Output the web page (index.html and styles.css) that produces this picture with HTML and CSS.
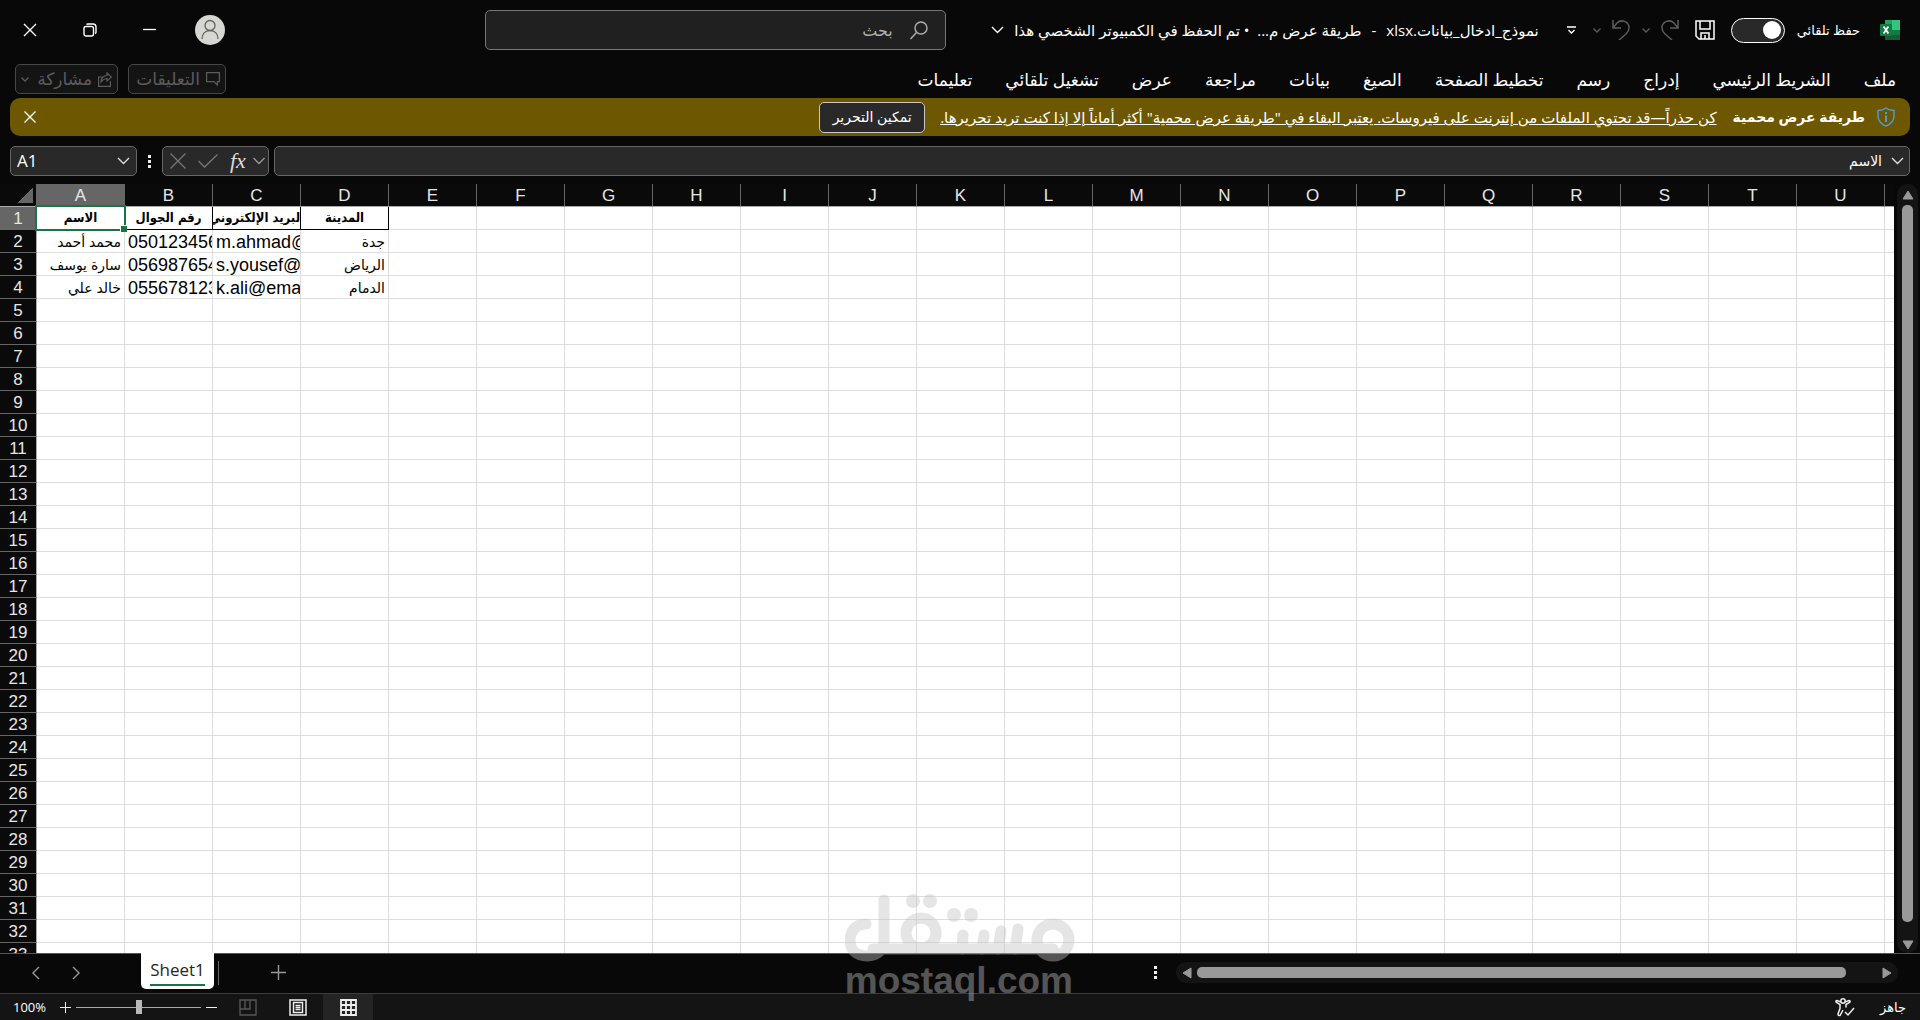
FILE: index.html
```html
<!DOCTYPE html>
<html lang="ar" dir="rtl">
<head>
<meta charset="utf-8">
<title>نموذج_ادخال_بيانات.xlsx</title>
<link rel="stylesheet" href="styles.css">
</head>
<body>
<header class="titlebar">
  <div class="titlebar-start">
    <svg class="app-icon" width="20" height="20" viewBox="0 0 20 20" aria-hidden="true">
      <path d="M5 0h15v20H5z" fill="#21a366"/><path d="M12 0h8v10h-8z" fill="#33c481"/><path d="M5 10h15v10H5z" fill="#185c37"/><path d="M12 10h8v5h-8z" fill="#107c41"/>
      <rect y="4" width="12" height="12" rx="1" fill="#107c41"/>
      <path d="M3.600 6.500l4.800 7M8.400 6.500l-4.800 7" stroke="#fff" stroke-width="1.800"/>
    </svg>
    <label class="autosave" for="autosave">حفظ تلقائي</label>
    <input class="toggle" type="checkbox" role="switch" id="autosave">
    <button class="icon-button save" aria-label="حفظ">
      <svg width="20" height="20" viewBox="0 0 20 20" fill="none" stroke="#fff" stroke-width="1.500"><path d="M1 1h18v18H4l-3-3zM5 1v8h10V1M6 19v-6h8v6M10 15v4"/></svg>
    </button>
    <button class="icon-button redo" aria-label="إعادة">
      <svg width="18" height="20" viewBox="0 0 18 20" fill="none" stroke="#5c5c5c" stroke-width="1.500"><path d="M17 0v8H9M17 8L13 3C9-1 1 1 1 8c0 2 1 4 3 6l7 6"/></svg>
    </button>
    <button class="icon-button history" aria-label="خيارات الإعادة"><svg width="8" height="5" viewBox="0 0 8 5" fill="none" stroke="#5c5c5c" stroke-width="1.300"><path d="M.5.5L4 4 7.500.5"/></svg></button>
    <button class="icon-button undo" aria-label="تراجع">
      <svg width="18" height="20" viewBox="0 0 18 20" fill="none" stroke="#5c5c5c" stroke-width="1.500"><path d="M1 0v8h8M1 8l4-5c4-4 12-2 12 5 0 2-1 4-3 6l-7 6"/></svg>
    </button>
    <button class="icon-button history" aria-label="خيارات التراجع"><svg width="8" height="5" viewBox="0 0 8 5" fill="none" stroke="#5c5c5c" stroke-width="1.300"><path d="M.5.5L4 4 7.500.5"/></svg></button>
    <button class="icon-button customize" aria-label="تخصيص"><svg width="9" height="9" viewBox="0 0 9 9" fill="none" stroke="#fff" stroke-width="1.300"><path d="M0 1h9M1.500 4l3 3 3-3"/></svg></button>
    <button class="doc-title"><span>نموذج_ادخال_بيانات.xlsx</span><span>-</span><span>طريقة عرض م...&nbsp; • تم الحفظ في الكمبيوتر الشخصي هذا</span><svg width="13" height="8" viewBox="0 0 13 8" fill="none" stroke="#fff" stroke-width="1.400"><path d="M1 1l5.500 5.500L12 1"/></svg></button>
  </div>
  <div class="search">
    <svg width="18" height="19" viewBox="0 0 18 19" fill="none" stroke="#b0b0b0" stroke-width="1.400"><circle cx="11" cy="7" r="6"/><path d="M6.700 11.300L.5 18"/></svg>
    <input type="text" placeholder="بحث" aria-label="بحث">
  </div>
  <div class="window-controls">
    <button class="avatar" aria-label="الحساب"><svg width="30" height="30" viewBox="0 0 30 30" fill="none" stroke="#626262" stroke-width="1.300"><circle cx="15" cy="10.500" r="5"/><path d="M7 24c0-5 3-8.500 8-8.500s8 3.500 8 8.500"/></svg></button>
    <button class="icon-button" aria-label="تصغير"><svg width="14" height="14" viewBox="0 0 14 14" stroke="#fff" stroke-width="1.300"><path d="M0 6.500h13"/></svg></button>
    <button class="icon-button" aria-label="استعادة"><svg width="14" height="14" viewBox="0 0 14 14" fill="none" stroke="#fff" stroke-width="1.400"><rect x="1" y="3.500" width="9.500" height="9.500" rx="2"/><path d="M3.500 1.500Q4 1 5 1h5q3 0 3 3v5q0 1-.8 1.600"/></svg></button>
    <button class="icon-button" aria-label="إغلاق"><svg width="14" height="14" viewBox="0 0 14 14" stroke="#fff" stroke-width="1.400"><path d="M1 1l12 12M13 1L1 13"/></svg></button>
  </div>
</header>

<div class="ribbon">
  <nav class="tabs">
    <button>ملف</button><button>الشريط الرئيسي</button><button>إدراج</button><button>رسم</button><button>تخطيط الصفحة</button><button>الصيغ</button><button>بيانات</button><button>مراجعة</button><button>عرض</button><button>تشغيل تلقائي</button><button>تعليمات</button>
  </nav>
  <div class="ribbon-actions">
    <button class="ribbon-action comments" disabled><svg width="14" height="14" viewBox="0 0 14 14" fill="none" stroke="#5c5c5c" stroke-width="1.200"><path d="M.6.600h12.800v9h-2v3.500L8 9.600H.6z"/></svg>التعليقات</button>
    <button class="ribbon-action share" disabled><svg width="14" height="15" viewBox="0 0 14 15" fill="none" stroke="#5c5c5c" stroke-width="1.200"><path d="M4 5H.6v9.400h11.800V9M9 1l4.500 4L9 9V6.500C6 6.500 4.500 8 3 10c0-4 2.500-6.500 6-6.500z"/></svg>مشاركة<svg class="share-arrow" width="8" height="5" viewBox="0 0 8 5" fill="none" stroke="#5c5c5c" stroke-width="1.300"><path d="M.5.5L4 4 7.500.5"/></svg></button>
  </div>
</div>

<div class="banner">
  <svg width="18" height="20" viewBox="0 0 18 20" fill="none" stroke="#4f9be0" stroke-width="1.400"><path d="M9 1c2.500 2 5 2.500 8 2.500V9c0 5-3 8-8 10-5-2-8-5-8-10V3.500C4 3.500 6.500 3 9 1z"/><path d="M9 8.500V15M9 5v2" stroke-width="2"/></svg>
  <strong>طريقة عرض محمية</strong>
  <a href="#protected">كن حذراً—قد تحتوي الملفات من إنترنت على فيروسات. يعتبر البقاء في "طريقة عرض محمية" أكثر أماناً إلا إذا كنت تريد تحريرها.</a>
  <button class="enable">تمكين التحرير</button>
  <button class="icon-button banner-close" aria-label="إغلاق"><svg width="12" height="12" viewBox="0 0 12 12" stroke="#fff" stroke-width="1.400"><path d="M.5.5l11 11M11.500.5l-11 11"/></svg></button>
</div>

<div class="formula-bar" dir="ltr">
  <div class="field name-box">
    <input type="text" value="A1" aria-label="مربع الاسم">
    <svg width="13" height="8" viewBox="0 0 13 8" fill="none" stroke="#ddd" stroke-width="1.400"><path d="M1 1l5.500 5.500L12 1"/></svg>
  </div>
  <span class="dots"></span>
  <div class="field fx-box">
    <svg width="16" height="16" viewBox="0 0 16 16" stroke="#777" stroke-width="1.300"><path d="M.5.5l15 15M15.500.5l-15 15"/></svg>
    <svg width="20" height="14" viewBox="0 0 20 14" fill="none" stroke="#777" stroke-width="1.300"><path d="M.5 7l6 6L19.500.5"/></svg>
    <button class="fx">fx</button>
    <svg width="12" height="8" viewBox="0 0 12 8" fill="none" stroke="#999" stroke-width="1.300"><path d="M.5 1L6 6.500 11.500 1"/></svg>
  </div>
  <div class="field formula" dir="rtl">
    <svg width="13" height="8" viewBox="0 0 13 8" fill="none" stroke="#ddd" stroke-width="1.400"><path d="M1 1l5.500 5.500L12 1"/></svg>
    <input type="text" value="الاسم" aria-label="شريط الصيغة">
  </div>
</div>

<main class="workspace" dir="ltr">
  <div class="sheet">
    <table class="grid">
      <thead><tr id="letters"><th class="corner"></th></tr></thead>
      <tbody id="rows">
        <tr class="headings"><th class="active">1</th><td class="selected"><div dir="rtl">الاسم</div></td><td><div dir="rtl">رقم الجوال</div></td><td><div dir="rtl">البريد الإلكتروني</div></td><td><div dir="rtl">المدينة</div></td></tr>
        <tr><th>2</th><td dir="rtl">محمد أحمد</td><td>0501234567</td><td>m.ahmad@email.com</td><td dir="rtl">جدة</td></tr>
        <tr><th>3</th><td dir="rtl">سارة يوسف</td><td>0569876543</td><td>s.yousef@email.com</td><td dir="rtl">الرياض</td></tr>
        <tr><th>4</th><td dir="rtl">خالد علي</td><td>0556781234</td><td>k.ali@email.com</td><td dir="rtl">الدمام</td></tr>
      </tbody>
    </table>
  </div>
  <div class="vscroll">
    <svg width="12" height="10" viewBox="0 0 12 10" fill="#999"><path d="M6 1l5 8H1z" stroke="#999" stroke-linejoin="round"/></svg>
    <span class="thumb"></span>
    <svg width="12" height="10" viewBox="0 0 12 10" fill="#999"><path d="M6 9l5-8H1z" stroke="#999" stroke-linejoin="round"/></svg>
  </div>
</main>

<div class="sheet-bar" dir="ltr">
  <button class="icon-button prev" aria-label="السابق"><svg width="8" height="14" viewBox="0 0 8 14" fill="none" stroke="#999" stroke-width="1.400"><path d="M7 1L1 7l6 6"/></svg></button>
  <button class="icon-button next" aria-label="التالي"><svg width="8" height="14" viewBox="0 0 8 14" fill="none" stroke="#999" stroke-width="1.400"><path d="M1 1l6 6-6 6"/></svg></button>
  <button class="sheet-tab"><span>Sheet1</span></button>
  <span class="tab-divider"></span>
  <button class="icon-button" aria-label="ورقة جديدة"><svg width="15" height="15" viewBox="0 0 15 15" stroke="#999" stroke-width="1.400"><path d="M7.500 0v15M0 7.500h15"/></svg></button>
  <div class="hscroll-area">
    <span class="dots"></span>
    <div class="hscroll">
      <svg width="10" height="12" viewBox="0 0 10 12" fill="#999"><path d="M1 6l8-5v10z" stroke="#999" stroke-linejoin="round"/></svg>
      <span class="thumb"></span>
      <svg width="10" height="12" viewBox="0 0 10 12" fill="#999"><path d="M9 6L1 1v10z" stroke="#999" stroke-linejoin="round"/></svg>
    </div>
  </div>
</div>

<footer class="status-bar">
  <div class="status">
    <span>جاهز</span>
    <svg width="20" height="19" viewBox="0 0 20 19" fill="none" stroke="#eee" stroke-width="1.500"><circle cx="8" cy="3" r="2.200"/><path d="M6 4L2 2.500Q0 3 1.500 4.500L5 6.500v4L3 16q0 2 2 1.500L8 12M10 4l4-1.500q2 .5.500 2L11 6.500v3M10 14l3 3 6-7"/></svg>
  </div>
  <div class="view-tools" dir="ltr">
    <label for="zoom">100%</label>
    <button class="icon-button plus" aria-label="تكبير"><svg width="11" height="11" viewBox="0 0 11 11" stroke="#eee"><path d="M5.500 0v11M0 5.500h11"/></svg></button>
    <input class="zoom" id="zoom" type="range" min="0" max="200" value="100">
    <button class="icon-button minus" aria-label="تصغير"><svg width="11" height="11" viewBox="0 0 11 11" stroke="#eee"><path d="M0 5.500h11"/></svg></button>
    <button class="view" aria-label="فواصل الصفحات"><svg width="18" height="17" viewBox="0 0 18 17" fill="none" stroke="#555" stroke-width="1.400"><path d="M1 1h16v15H1zM1 10h10V1M6 1v9"/></svg></button>
    <button class="view" aria-label="تخطيط الصفحة"><svg width="18" height="17" viewBox="0 0 18 17" fill="none" stroke="#eee" stroke-width="1.500"><path d="M1 1h16v15H1zM4.500 3.500h9v10h-9zM6.500 6.500h5M6.500 8.500h5M6.500 10.500h5"/></svg></button>
    <button class="view current" aria-label="عادي"><svg width="17" height="17" viewBox="0 0 17 17" fill="none" stroke="#eee" stroke-width="1.800"><path d="M1 1h15v15H1zM6 1v15M11 1v15M1 6h15M1 11h15"/></svg></button>
  </div>
</footer>

<div class="watermark" dir="ltr">
  <svg width="230" height="68" viewBox="0 0 230 68" fill="none" stroke="#c2c2c2" stroke-width="11" stroke-linecap="round">
    <path d="M21 30C11 30 5 37 5 46c0 10 7 16 17 16s17-6 17-16V6M28 55H208"/>
    <circle cx="76" cy="39" r="15"/><circle cx="208" cy="46" r="16"/>
    <path d="M117 55l1-14M137 55l2-14M153 55l3-18M170 55l3-20" stroke-width="11"/>
    <g fill="#c2c2c2" stroke="none"><circle cx="68" cy="7" r="7"/><circle cx="85" cy="7" r="7"/><circle cx="109" cy="21" r="7"/><circle cx="126" cy="21" r="7"/></g>
  </svg>
  <span>mostaql.com</span>
</div>
<script src="grid.js"></script>
</body>
</html>
```
FILE: styles.css
```css
* { box-sizing: border-box; }
html, body { height: 100%; }
body {
  margin: 0;
  display: flex;
  flex-direction: column;
  overflow: hidden;
  background: #080808;
  color: #fff;
  font: 14px/20px "Open Sans", "DejaVu Sans", sans-serif;
}
button, input { font: inherit; color: inherit; margin: 0; padding: 0; border: 0; background: none; }
svg { display: block; flex: none; }
.icon-button { display: block; flex: none; }

.titlebar { height: 60px; display: flex; align-items: center; flex: none; padding: 0 20px 0 23px; }
.titlebar-start { flex: 1; display: flex; align-items: center; min-width: 0; }
.autosave { margin-right: 20px; font-size: 13px; white-space: nowrap; }
.toggle {
  appearance: none; flex: none; width: 54px; height: 25px; margin-right: 12px;
  border: 1px solid #fff; border-radius: 13px; background: #292929;
  display: flex; align-items: center; padding: 0 3px;
}
.toggle::before { content: ""; width: 18px; height: 18px; border-radius: 50%; background: #fff; }
.save { margin-right: 16px; }
.redo { margin-right: 16px; }
.history { margin-right: 11px; }
.undo { margin-right: 12px; }
.customize { margin-right: 17px; }
.doc-title { display: flex; align-items: center; gap: 10px; margin-right: 28px; font-size: 15px; white-space: nowrap; }
.search {
  flex: none; width: 24vw; height: 40px; display: flex; align-items: center; gap: 17px; padding: 0 17px;
  border: 1px solid #767676; border-radius: 5px; background: #202020;
}
.search input { flex: 1; min-width: 0; font-size: 16px; }
.search input::placeholder { color: #b0b0b0; opacity: 1; }
.window-controls { display: flex; align-items: center; gap: 46px; margin-right: 260px; }
.avatar { width: 30px; height: 30px; border-radius: 50%; background: #d6d6d2; margin-left: -8px; }

.ribbon { height: 38px; flex: none; display: flex; justify-content: space-between; align-items: center; padding: 0 24px 0 15px; }
.tabs { display: flex; gap: 33px; padding-top: 2px; font-size: 17px; white-space: nowrap; }
.ribbon-actions { display: flex; gap: 10px; }
.ribbon-action {
  height: 30px; display: flex; align-items: center; gap: 6px; padding: 0 5px;
  border: 1px solid #474747; border-radius: 5px; background: #141414; color: #5c5c5c; font-size: 17px; white-space: nowrap;
}
.comments { width: 98px; }
.share { width: 103px; }
.share-arrow { margin-right: auto; }

.banner {
  flex: none; height: 38px; margin: 0 10px; padding: 0 15px 0 14px; border-radius: 10px; background: #6d5700;
  display: flex; align-items: center; white-space: nowrap;
}
.banner strong { margin: 0 12px 0 16px; font-size: 14px; }
.banner a { color: #fff; font-size: 15px; }
.enable { width: 106px; height: 31px; margin-right: 15px; border: 1px solid #c8c8c8; border-radius: 5px; background: #292929; font-size: 14px; }
.banner-close { margin-right: auto; }

.formula-bar { flex: none; display: flex; align-items: center; padding: 10px 10px 8px; }
.field { height: 30px; display: flex; align-items: center; border: 1px solid #666; border-radius: 5px; background: #292929; }
.name-box { width: 127px; padding: 0 6px; font: 17px/20px "Open Sans", sans-serif; }
.name-box input { flex: 1; min-width: 0; }
.dots { width: 3px; height: 13px; flex: none; background: repeating-linear-gradient(#eee 0 3px, transparent 3px 5px); }
.formula-bar .dots { margin: 0 11px; }
.fx-box { width: 107px; padding: 0 2px 0 7px; gap: 12px; }
.fx { font: italic 22px/24px "Liberation Serif", serif; color: #ddd; }
.fx-box svg:last-child { margin-left: -5px; }
.formula { flex: 1; margin-left: 5px; padding: 0 5px; gap: 9px; }
.formula input { flex: 1; min-width: 0; }

.workspace { flex: 1; min-height: 0; display: flex; }
.sheet { flex: 1; min-width: 0; overflow: hidden; background: #fff; }
.grid { width: max-content; table-layout: fixed; border-spacing: 0; font: 17px/20px "Liberation Sans", "DejaVu Sans", sans-serif; color: #000; }
.grid th, .grid td { height: 23px; padding: 2px 0 0; overflow: hidden; white-space: nowrap; }
.grid th { font-weight: 400; background: #0a0a0a; color: #e6e6e6; text-align: center; border: solid #666; border-width: 0 1px 1px 0; }
.grid thead th { width: 88px; border-bottom-color: #aaa; }
.grid thead .corner { width: 37px; background: linear-gradient(135deg, transparent 50%, #666 50%) 18px 4px / 15px 15px no-repeat #0a0a0a; }
.grid tbody th { border-right-color: #aaa; }
.grid th.active { background: #666; }
.grid td { max-width: 88px; padding: 2px 3px 0; border: solid #dedede; border-width: 0 1px 1px 0; font-size: 18px; }
.grid td[dir="rtl"] { text-align: right; font-size: 14px; }
.grid .headings td { font-weight: 700; font-size: 13px; font-family: "DejaVu Sans Condensed", "DejaVu Sans", sans-serif; padding: 0; }
.grid .headings td:nth-child(-n+5) { border-color: #000; }
.headings div { display: flex; justify-content: center; }
.grid .selected { position: relative; overflow: visible; }
.selected::before { content: ""; position: absolute; inset: -2px; border: 2px solid #1b7444; }
.selected::after { content: ""; position: absolute; right: -3px; bottom: -3px; width: 6px; height: 6px; background: #1b7444; border: solid #fff; border-width: 1px 0 0 1px; }
.vscroll {
  flex: none; width: 21px; margin: 0 2px 0 3px; padding: 6px 0 3px; border-radius: 10px; background: #141414;
  display: flex; flex-direction: column; align-items: center; gap: 5px;
}
.vscroll .thumb { flex: 1; width: 11px; margin-bottom: 13px; border-radius: 5px; background: #999; }

.sheet-bar { flex: none; height: 40px; display: flex; align-items: center; padding: 0 4px 2px 32px; border-top: 1px solid #555; }
.next { margin-left: 32px; }
.sheet-tab { align-self: flex-start; width: 73px; height: 36px; margin: -1px 0 0 61px; border-radius: 0 0 5px 5px; background: #fff; color: #262626; font-size: 17px; line-height: 24px; }
.sheet-tab span { display: inline-block; height: 28px; margin-top: 2px; border-bottom: 2px solid #1b7444; }
.tab-divider { width: 1px; height: 24px; margin: 0 52px 0 4px; background: #666; }
.hscroll-area { width: 762px; margin-left: auto; display: flex; align-items: center; gap: 19px; }
.hscroll { flex: 1; height: 21px; padding: 0 6px; border-radius: 10px; background: #141414; display: flex; align-items: center; gap: 5px; margin-right: 18px; }
.hscroll .thumb { flex: 1; height: 11px; margin-right: 31px; border-radius: 5px; background: #999; }

.status-bar { flex: none; height: 27px; display: flex; justify-content: space-between; padding: 0 14px 0 13px; border-top: 1px solid #3d3d3d; background: #141414; font-size: 13px; }
.status { display: flex; align-items: center; gap: 25px; }
.view-tools { display: flex; align-items: center; font-size: 13px; }
.plus { margin-left: 14px; }
.zoom { appearance: none; width: 125px; height: 14px; margin: 0 5px; background: linear-gradient(#aaa 0 0) center / 100% 1px no-repeat; }
.zoom::-webkit-slider-thumb { appearance: none; width: 6px; height: 14px; background: #b8b8b4; }
.view { width: 50px; height: 26px; display: grid; place-items: center; }
.minus + .view { margin-left: 6px; }
.current { background: #242424; }

.watermark { position: absolute; left: 44%; bottom: 20px; width: 230px; opacity: .41; pointer-events: none; }
.watermark span { display: block; color: #c2c2c2; font: 700 37px/38px "Liberation Sans", sans-serif; }
```
FILE: grid.js
```js
// Fills the sheet with empty cells up to the edges of the window.
const columns = Math.ceil((window.innerWidth - 60) / 88);
const rowCount = Math.ceil((window.innerHeight - 274) / 23);
const letters = document.getElementById('letters');
const rows = document.getElementById('rows');

for (let c = 0; c < columns; c++) {
  const th = document.createElement('th');
  // The last column is only partly in view, so it carries no letter.
  if (c < columns - 1) th.textContent = String.fromCharCode(65 + c);
  if (c === 0) th.className = 'active';
  letters.append(th);
}
for (let r = 1; r <= rowCount; r++) {
  let tr = rows.rows[r - 1];
  if (!tr) {
    tr = rows.insertRow();
    const th = document.createElement('th');
    th.textContent = r;
    tr.append(th);
  }
  while (tr.cells.length <= columns) tr.insertCell();
}
```
